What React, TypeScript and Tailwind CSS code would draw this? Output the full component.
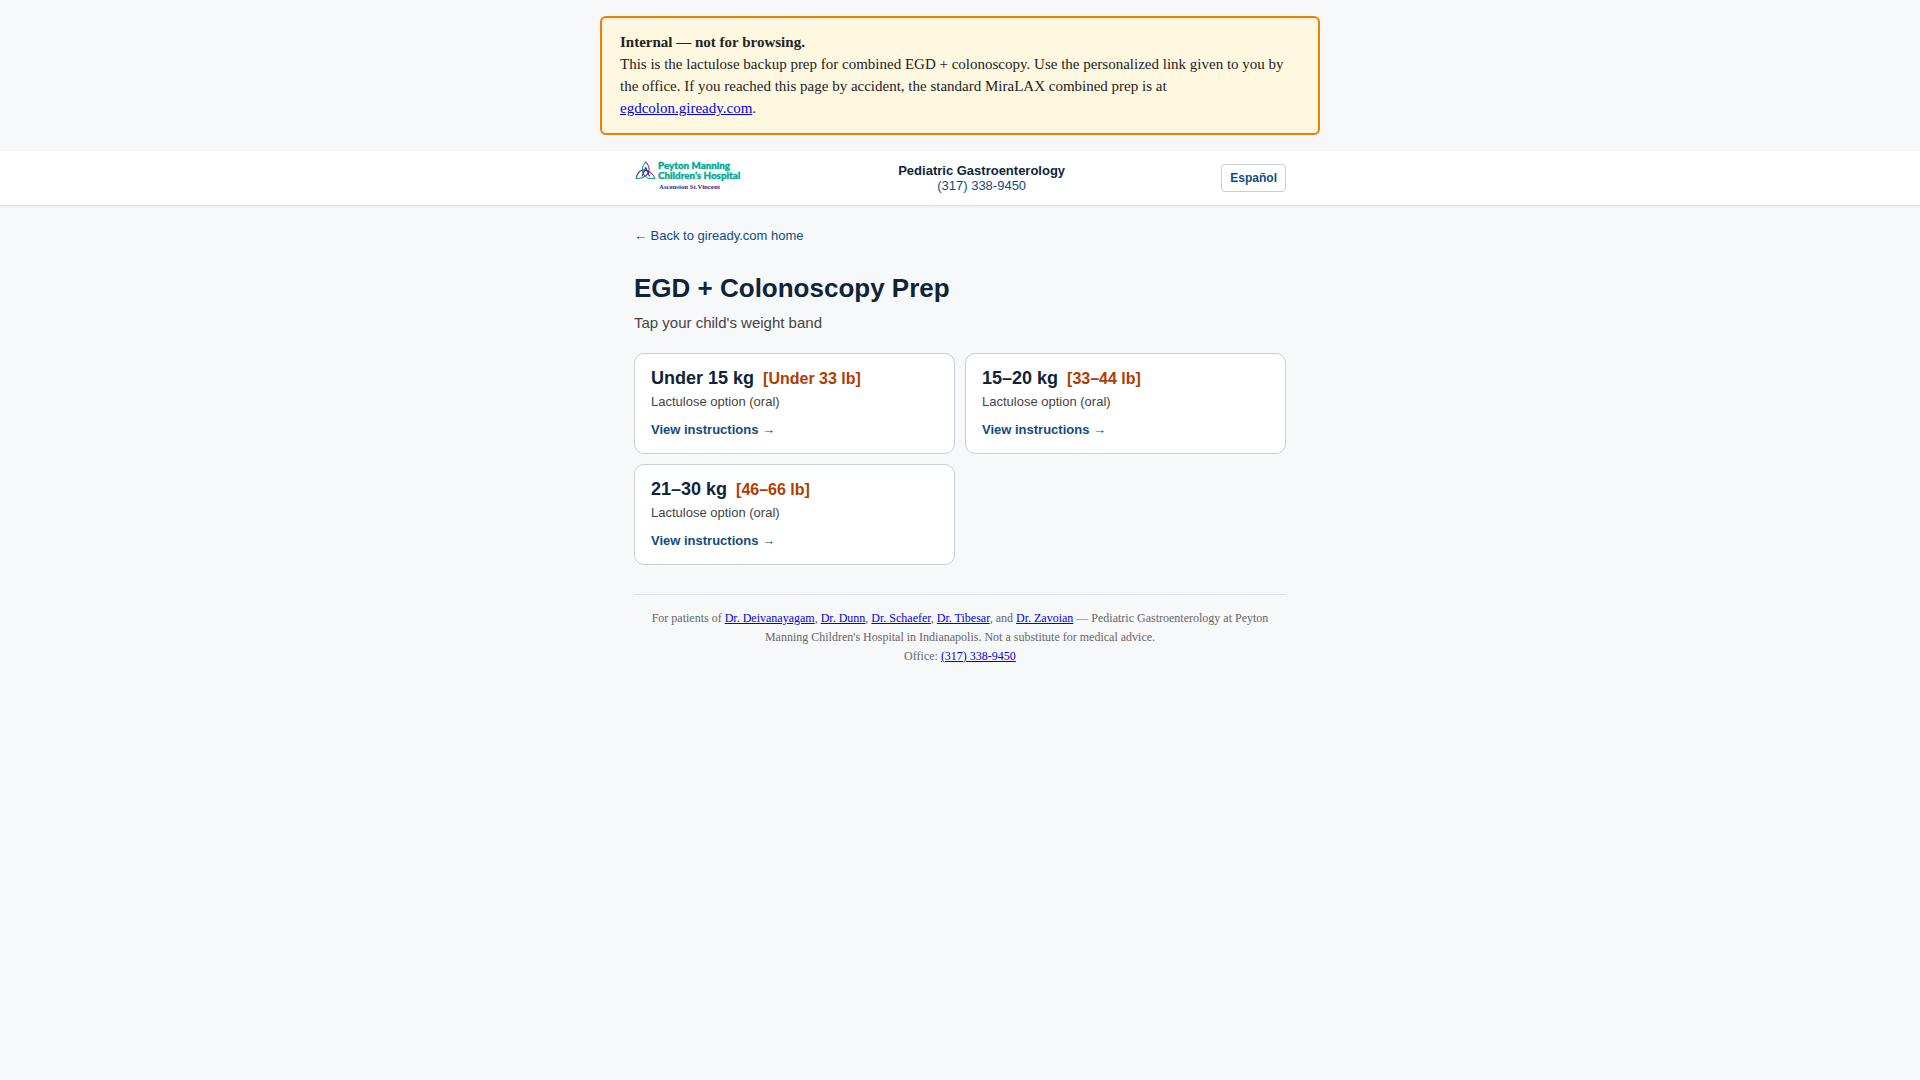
const OFFICE_PHONE = '(317) 338-9450'
const OFFICE_TEL = 'tel:+13173389450'

type WeightBand = {
  kg: string
  lb: string
  note: string
  href: string
}

const WEIGHT_BANDS: WeightBand[] = [
  { kg: 'Under 15 kg', lb: '[Under 33 lb]', note: 'Lactulose option (oral)', href: '#under-15' },
  { kg: '15–20 kg', lb: '[33–44 lb]', note: 'Lactulose option (oral)', href: '#15-20' },
  { kg: '21–30 kg', lb: '[46–66 lb]', note: 'Lactulose option (oral)', href: '#21-30' },
]

function HospitalLogo() {
  return (
    <svg
      width="108"
      height="42"
      viewBox="0 -3 108 42"
      role="img"
      aria-label="Peyton Manning Children's Hospital"
    >
      <defs>
        <linearGradient id="knot-a" gradientUnits="userSpaceOnUse" x1="12" y1="2" x2="4" y2="18">
          <stop offset="0.2" stopColor="#b5379a" />
          <stop offset="0.6" stopColor="#27348b" />
          <stop offset="1" stopColor="#00a88f" />
        </linearGradient>
        <linearGradient id="knot-b" gradientUnits="userSpaceOnUse" x1="2" y1="17" x2="20" y2="17">
          <stop offset="0.1" stopColor="#4356a5" />
          <stop offset="0.6" stopColor="#27348b" />
          <stop offset="1" stopColor="#b5379a" />
        </linearGradient>
        <linearGradient id="knot-c" gradientUnits="userSpaceOnUse" x1="19" y1="18" x2="10" y2="2">
          <stop offset="0" stopColor="#00a88f" />
          <stop offset="0.45" stopColor="#27348b" />
          <stop offset="0.8" stopColor="#00a88f" />
        </linearGradient>
      </defs>
      {/* Trefoil knot */}
      <g fill="none" strokeWidth="1.1" strokeLinecap="round" strokeLinejoin="round">
        <path d="M11.8 2.2C16.4 6.8 16 12.6 11.8 15.9 9 18 5.2 18.8 2.2 18.2" stroke="url(#knot-a)" />
        <path d="M2.2 18.2C3.2 11.7 7.9 8.9 12.2 10.4 16.6 11.8 19.6 14.4 20.8 18.2" stroke="url(#knot-b)" />
        <path d="M20.8 18.2C15.8 19.4 11 17.8 9.2 13.4 7.4 9 8.8 5 11.8 2.2" stroke="url(#knot-c)" />
        <path d="M11.8 7.5 8.2 16M11.8 7.5l3.6 8.5" stroke="#27348b" />
      </g>
      <g
        fill="#00a88f"
        stroke="#00a88f"
        strokeWidth="0.3"
        fontFamily="Lato, 'Open Sans', sans-serif"
        fontWeight="900"
        fontSize="9.8"
      >
        <text x="24" y="9">Peyton Manning</text>
        <text x="24" y="19">Children’s Hospital</text>
      </g>
      <text x="25" y="29" fill="#27348b" fontFamily="'Liberation Serif', serif" fontWeight="700" fontSize="6.8">
        Ascension St.Vincent
      </text>
    </svg>
  )
}

function InternalNotice() {
  return (
    <aside className="mx-auto my-4 max-w-[720px] rounded-md border-2 border-[#f57c00] bg-[#fff8e1] px-[18px] pt-[13px] pb-[14px] font-['Liberation_Serif',serif] text-[15px] leading-[22px] text-[#222]">
      <strong className="block">Internal — not for browsing.</strong>
      This is the lactulose backup prep for combined EGD + colonoscopy. Use the personalized link given to you by
      the office. If you reached this page by accident, the standard MiraLAX combined prep is at{' '}
      <a href="#standard-prep" className="text-[#0000ee] underline">egdcolon.giready.com</a>.
    </aside>
  )
}

function SiteHeader() {
  return (
    <header className="border-b border-[#dde3ea] bg-white shadow-[0_1px_3px_rgba(0,0,0,0.06)]">
      <div className="mx-auto flex max-w-[680px] items-center justify-between px-[14px] py-[6px]">
        <a href="#home">
          <HospitalLogo />
        </a>
        <div className="text-center text-[13px] leading-[15px]">
          <div className="font-bold text-[#0f2438]">Pediatric Gastroenterology</div>
          <a href={OFFICE_TEL} className="block text-[#0f4c81]">{OFFICE_PHONE}</a>
        </div>
        <button
          type="button"
          className="h-7 rounded border border-[#c5d0dc] bg-white px-2 text-xs font-bold text-[#0f4c81]"
        >
          Español
        </button>
      </div>
    </header>
  )
}

function BandCard({ kg, lb, note, href }: WeightBand) {
  return (
    <a href={href} className="block rounded-[10px] border border-[#c5d0dc] bg-white px-4 py-[14px]">
      <div className="flex items-baseline gap-[9px] font-bold">
        <span className="text-lg leading-[21px] text-[#0f2438]">{kg}</span>
        <span className="text-base leading-[21px] text-[#b23c00]">{lb}</span>
      </div>
      <div className="mt-1 text-[13px] leading-[18px] text-[#444]">{note}</div>
      <div className="mt-[9px] text-[13px] leading-[19px] font-bold text-[#0f4c81]">View instructions →</div>
    </a>
  )
}

function DoctorLink({ name }: { name: string }) {
  return <a href="#team" className="text-[#0000ee] underline">{name}</a>
}

export default function App() {
  return (
    <div className="flow-root min-h-screen bg-[#f7f8fa] font-['Liberation_Sans',Arial,sans-serif]">
      <InternalNotice />
      <SiteHeader />

      <main className="mx-auto max-w-[680px] px-[14px] pt-[19px]">
        <a href="#home" className="block text-[13px] leading-[22px] text-[#0f4c81]">← Back to giready.com home</a>
        <h1 className="mt-6 text-[26px] leading-[34px] font-bold text-[#0f2438]">EGD + Colonoscopy Prep</h1>
        <p className="mt-[6px] text-[15px] leading-6 text-[#444]">Tap your child's weight band</p>

        <div className="mt-[18px] grid grid-cols-1 gap-[10px] sm:grid-cols-2">
          {WEIGHT_BANDS.map((band) => (
            <BandCard key={band.kg} {...band} />
          ))}
        </div>

        <footer className="mt-[29px] border-t border-[#dde3ea] px-4 py-[14px] text-center font-['Liberation_Serif',serif] text-xs leading-[19px] text-[#666]">
          <p>
            For patients of <DoctorLink name="Dr. Deivanayagam" />, <DoctorLink name="Dr. Dunn" />,{' '}
            <DoctorLink name="Dr. Schaefer" />, <DoctorLink name="Dr. Tibesar" />, and{' '}
            <DoctorLink name="Dr. Zavoian" /> — Pediatric Gastroenterology at Peyton Manning Children's Hospital in
            Indianapolis. Not a substitute for medical advice.
          </p>
          <p>
            Office: <a href={OFFICE_TEL} className="text-[#0000ee] underline">{OFFICE_PHONE}</a>
          </p>
        </footer>
      </main>
    </div>
  )
}
